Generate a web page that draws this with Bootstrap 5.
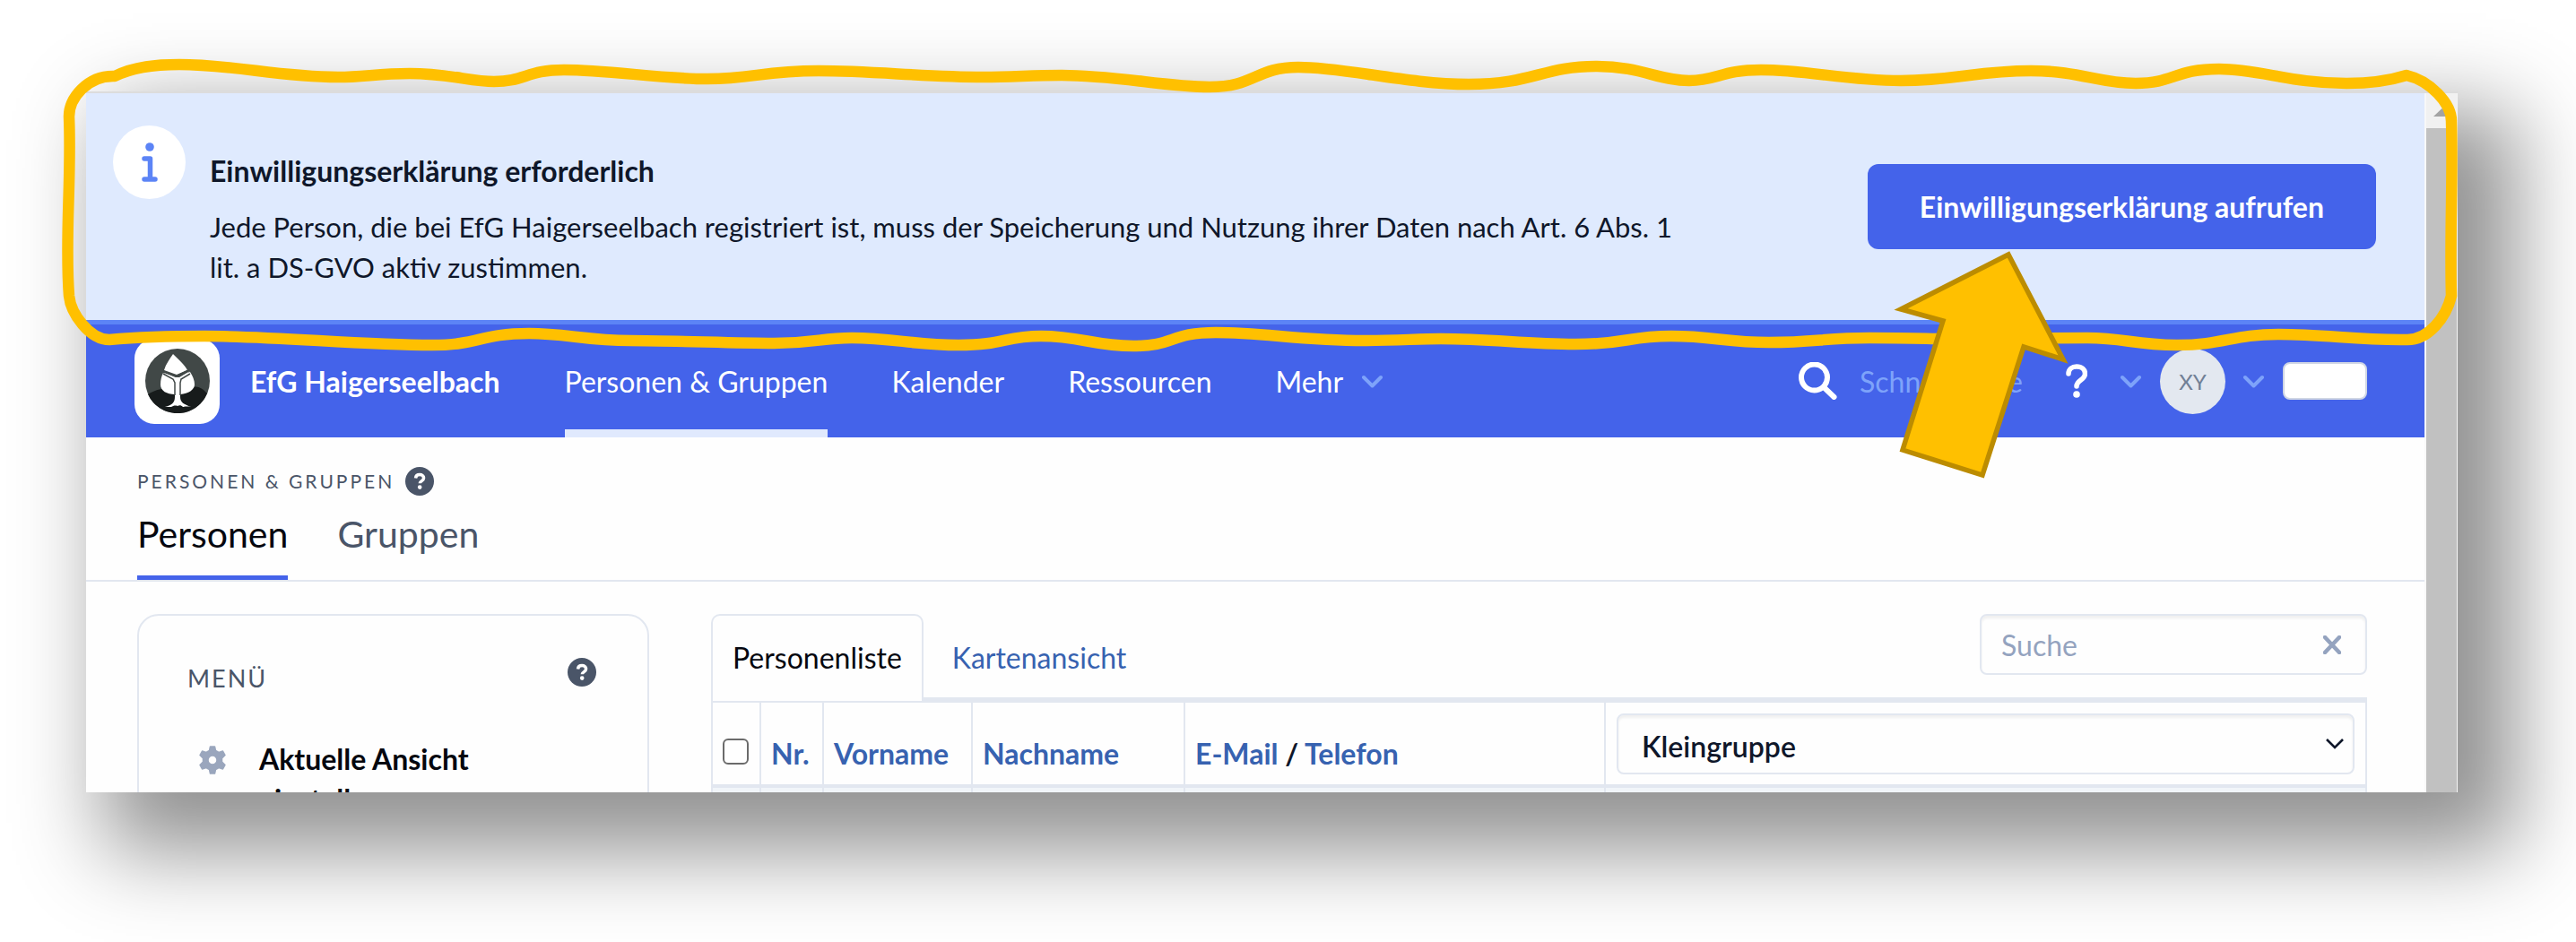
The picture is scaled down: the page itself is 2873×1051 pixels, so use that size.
<!DOCTYPE html>
<html lang="de">
<head>
<meta charset="utf-8">
<meta name="viewport" content="width=device-width, initial-scale=1">
<title>Personen &amp; Gruppen – EfG Haigerseelbach</title>
<link href="https://cdn.jsdelivr.net/npm/bootstrap@5.3.0/dist/css/bootstrap.min.css" rel="stylesheet">
<style>
  :root { --ink: #0f172a; --slate: #4a5568; --line: #e2e7f0; --accent: #4463ea; --link: #3762b0; --soft: #dfeafe; }
  body { font-family: Lato, "Liberation Sans", sans-serif; font-size: 32px; line-height: 45px; color: var(--ink); background: #fff; padding: 102px 132px 167px 96px; }
  a { text-decoration: none; }
  .app-window { border-top: 2px solid #dcdcdc; background: #fefefe; box-shadow: 42px 44px 90px 22px rgba(0, 0, 0, .43); }
  .app-main { min-width: 0; }

  .consent { background: var(--soft); border-bottom: 5px solid #5c84f6; padding: 36px 54px 36px 30px; gap: 27px; }
  .consent-icon { width: 81px; height: 82px; background: #fff; border-radius: 50%; }
  .consent-text { font-size: 31px; padding-top: 28px; padding-right: 180px; }
  .consent-title { font-size: 32px; line-height: 45px; font-weight: 700; margin-bottom: 18px; }
  .btn-consent { --bs-btn-bg: var(--accent); --bs-btn-color: #fff; --bs-btn-hover-bg: #3552d6; --bs-btn-hover-color: #fff; font-size: 32px; line-height: 45px; font-weight: 700; padding: 25px 58px; border-radius: 12px; }

  .topnav { background: var(--accent); height: 126px; padding: 0 64px 0 54px; }
  .topnav a { color: #fff; }
  .logo-tile { width: 95px; height: 95px; border-radius: 22px; background: #fff; }
  .brand-name { font-weight: 700; margin-left: 34px; margin-right: 72px; }
  .topnav .main-links { gap: 71px; }
  .topnav .main-links a { border-bottom: 9px solid transparent; padding-top: 9px; }
  .topnav .main-links a.active { border-color: #e0e9fd; }
  .more-chev { margin-left: 20px; }
  .quick { background: none; border: 0; color: #fff; width: 230px; padding: 0; margin-left: 25px; line-height: 45px; }
  .quick::placeholder { color: #7ea3fa; opacity: 1; }
  .quick:focus { outline: 0; }
  .help-btn { gap: 36px; margin-right: 20px; }
  .topnav .avatar { width: 73px; height: 73px; border-radius: 50%; background: #e3e8f0; color: #718096; font-size: 24px; }
  .user-chev { margin: 0 20px 0 19px; }
  .blank-btn { width: 94px; height: 42px; border-radius: 8px; border: 2px solid #cfd6e4; background: #fff; }
  .plain-btn { border: 0; background: none; padding: 0; line-height: 0; }

  .page-head { border-bottom: 2px solid var(--line); padding: 31px 57px 0; }
  .crumb { font-size: 21px; line-height: 35px; letter-spacing: 3px; color: var(--slate); gap: 12px; }
  .page-tabs { gap: 55px; font-size: 41px; line-height: 60px; padding-top: 12px; }
  .page-tabs a { color: var(--slate); padding-bottom: 16px; border-bottom: 5px solid transparent; }
  .page-tabs a.active { color: #05070f; border-color: var(--accent); }

  .page-body { padding: 36px 64px 0 57px; gap: 69px; }
  .side-menu { width: 571px; border: 2px solid var(--line); border-radius: 24px; padding: 47px 57px 47px 54px; }
  .side-title { font-size: 27px; line-height: 45px; letter-spacing: 2px; color: var(--slate); font-weight: 400; margin: 0; }
  .side-item { color: #05070f; font-weight: 700; gap: 36px; padding: 45px 60px 0 12px; }
  .list-area { min-width: 0; }
  .list-tabs { height: 97px; }
  .list-tabs .nav-link { border: 2px solid transparent; border-radius: 10px 10px 0 0; color: var(--link); padding: 24px 22px 22px; line-height: 46px; }
  .list-tabs .nav-link.active { color: #05070f; border-color: var(--line); border-bottom: 0; background: #fefefe; }
  .list-tabs .tab-fill { border-bottom: 4px solid var(--line); }
  .search-box { width: 432px; height: 68px; border: 2px solid var(--line); border-radius: 8px; box-shadow: inset 0 3px 3px rgba(0, 0, 0, .06); padding: 0 27px 0 22px; }
  .search-box input { border: 0; background: none; padding: 0; min-width: 0; line-height: 45px; }
  .search-box input::placeholder { color: #94a3bf; opacity: 1; }
  .search-box input:focus { outline: 0; }
  .people { table-layout: fixed; width: 100%; border-collapse: collapse; }
  .people col:nth-child(1) { width: 54px; }
  .people col:nth-child(2) { width: 70px; }
  .people col:nth-child(3) { width: 166px; }
  .people col:nth-child(4) { width: 237px; }
  .people col:nth-child(5) { width: 469px; }
  .people th, .people td { border: 2px solid var(--line); padding: 0 0 0 11px; }
  .people thead th { border-bottom: 4px solid var(--line); height: 94px; vertical-align: bottom; padding-bottom: 12px; font-weight: 700; white-space: nowrap; }
  .people thead th.pick { vertical-align: middle; padding: 0 12px; }
  .people td { height: 60px; background: #f1f5f9; }
  .people a { color: var(--link); }
  .people .form-check-input { display: block; width: 29px; height: 29px; margin: 0 0 10px; border: 2px solid #6b6b6b; border-radius: 6px; }
  .field-select { height: 68px; font-size: 32px; line-height: 45px; font-weight: 600; color: var(--ink); border: 2px solid var(--line); border-radius: 8px; padding: 5px 60px 0 26px; background-color: #fefefe; box-shadow: inset 0 3px 3px rgba(0, 0, 0, .06);
    background-image: url("data:image/svg+xml,%3Csvg xmlns='http://www.w3.org/2000/svg' viewBox='0 0 20 12'%3E%3Cpath fill='none' stroke='%230f172a' stroke-width='2.6' d='M1 1l9 9 9-9'/%3E%3C/svg%3E"); background-size: 20px 12px; background-position: right 10px center; }

  .scroll-rail { width: 37px; background: #f1f1f1; border-left: 2px solid #f8f8f8; border-right: 1px solid #f4f4f4; }
  .scroll-up { height: 39px; padding-top: 3px; }
  .scroll-thumb { background: #c1c1c1; }
  .notes { position: absolute; inset: 0; width: 100%; pointer-events: none; }
</style>
</head>
<body class="vh-100 position-relative overflow-hidden d-flex">

<svg class="d-none">
  <symbol id="chev" viewBox="0 0 25 15"><path d="M3 3l9.500 9.500L22 3" fill="none" stroke="#7ea3fa" stroke-width="4" stroke-linecap="round" stroke-linejoin="round"/></symbol>
  <symbol id="help" viewBox="0 0 32 32"><circle cx="16" cy="16" r="16" fill="#4a5568"/><path d="M11.500 12.500c.3-2.600 2-3.900 4.600-3.900 2.500 0 4.500 1.400 4.500 3.700 0 3.400-4.300 3.200-4.300 6" fill="none" stroke="#fff" stroke-width="3.500"/><circle cx="16.200" cy="22.600" r="2.300" fill="#fff"/></symbol>
</svg>

<div class="app-window flex-grow-1 d-flex">
  <div class="app-main flex-grow-1 overflow-hidden">

    <section class="consent d-flex align-items-start">
      <span class="consent-icon flex-shrink-0 d-flex align-items-center justify-content-center">
        <svg width="18" height="44" viewBox="0 0 18 44" fill="none" stroke="#5c84f6" stroke-width="5.500" stroke-linecap="round" stroke-linejoin="round"><circle cx="9" cy="5" r="4.800" fill="#5c84f6" stroke="none"/><path d="M3 18h6.500v22M3 41h12"/></svg>
      </span>
      <div class="consent-text flex-grow-1">
        <h2 class="consent-title">Einwilligungserklärung erforderlich</h2>
        <p class="mb-0">Jede Person, die bei EfG Haigerseelbach registriert ist, muss der Speicherung und Nutzung ihrer Daten nach Art. 6 Abs. 1 lit. a DS-GVO aktiv zustimmen.</p>
      </div>
      <button type="button" class="btn btn-consent flex-shrink-0 align-self-center border-0">Einwilligungserklärung aufrufen</button>
    </section>

    <nav class="topnav d-flex align-items-center text-nowrap">
      <a href="#" class="logo-tile flex-shrink-0 d-flex align-items-center justify-content-center" aria-label="Startseite">
        <svg width="72" height="72" viewBox="0 0 72 72">
          <circle cx="36" cy="36" r="36" fill="#414847"/>
          <path d="M3 51C10 46 22 43 36 43s22-3 29 3q2 2 4 4A36 36 0 0 1 3 51z" fill="#171b1b"/>
          <g fill="#fff"><path d="M31 6c6 6 13 12 16 18l-12 5-14-5C23 17 27 12 31 6z"/><path d="M20 27c6 2 12 5 13 8v16c-9 0-16-4-16-11 0-5 1-9 3-13z"/><path d="M50 26c-6 2-10 5-11 9v16c9-1 16-5 16-11 0-5-2-9-5-14z"/><path d="M33 35l-12-8 13 5h4l12-7-11 9v20c0 6 4 8 12 11-6-1-8 0-9 0-2-2-4-2-6-1-3-1-5 0-7 1-3 0-4 0-7 0 8-2 11-5 11-11z"/></g>
          <path d="M20 25l14 6 14-7M20 28l11 6 2 4v14M50 28l-10 6-1 4v14" fill="none" stroke="#414847" stroke-width="1.500"/>
        </svg>
      </a>
      <a href="#" class="brand-name">EfG Haigerseelbach</a>
      <div class="main-links d-flex h-100">
        <a href="#" class="active d-flex align-items-center" aria-current="page">Personen &amp; Gruppen</a>
        <a href="#" class="d-flex align-items-center">Kalender</a>
        <a href="#" class="d-flex align-items-center">Ressourcen</a>
        <a href="#" class="d-flex align-items-center">Mehr <svg class="more-chev" width="25" height="15"><use href="#chev"/></svg></a>
      </div>
      <label class="ms-auto d-flex align-items-center" for="quick" aria-label="Schnellsuche">
        <svg width="43" height="42" viewBox="0 0 43 42" fill="none" stroke="#fff" stroke-width="6" stroke-linecap="round"><circle cx="17.500" cy="17" r="14.500"/><path d="M28 28l11.500 11"/></svg>
      </label>
      <input class="quick" id="quick" type="text" placeholder="Schnellsuche">
      <button type="button" class="plain-btn help-btn d-flex align-items-center" aria-label="Hilfe">
        <svg width="24" height="38" viewBox="0 0 24 38"><path d="M3 11c0-5 4-8 9-8 6 0 9.500 3.500 9.500 8 0 7-9.500 7-9.500 14" fill="none" stroke="#fff" stroke-width="5.500" stroke-linecap="round"/><circle cx="12" cy="34" r="3.800" fill="#fff"/></svg>
        <svg width="25" height="15"><use href="#chev"/></svg>
      </button>
      <a href="#" class="avatar flex-shrink-0 d-flex align-items-center justify-content-center">XY</a>
      <svg class="user-chev flex-shrink-0" width="25" height="15"><use href="#chev"/></svg>
      <button type="button" class="blank-btn flex-shrink-0" aria-label="Aktion"></button>
    </nav>

    <header class="page-head">
      <div class="crumb d-flex align-items-center">PERSONEN &amp; GRUPPEN <svg width="32" height="32"><use href="#help"/></svg></div>
      <div class="page-tabs d-flex">
        <a href="#" class="active" aria-current="page">Personen</a>
        <a href="#">Gruppen</a>
      </div>
    </header>

    <div class="page-body d-flex align-items-start">
      <aside class="side-menu flex-shrink-0">
        <div class="d-flex justify-content-between">
          <h3 class="side-title">MENÜ</h3>
          <svg width="32" height="32"><use href="#help"/></svg>
        </div>
        <a href="#" class="side-item d-flex align-items-start">
          <svg class="flex-shrink-0 mt-2" width="32" height="32" viewBox="-16 -16 32 32" fill="#9aa6bd" stroke="#9aa6bd" stroke-width="1.500" stroke-linejoin="round"><path fill-rule="evenodd" d="M-2.500-15h5l1 4.500L7-8.500l4.500-1.500 2.500 4.500L10.500-2v4l3.500 3.500-2.500 4.500L7 8.500 3.500 10.500l-1 4.500h-5l-1-4.500L-7 8.500l-4.500 1.500L-14 5.500-10.500 2v-4L-14-5.500l2.500-4.500 4.500 1.500 3.500-2zM0-5a5 5 0 1 0 0 10A5 5 0 1 0 0-5z"/></svg>
          <span>Aktuelle Ansicht<br>einstellen</span>
        </a>
      </aside>

      <div class="list-area flex-grow-1">
        <div class="list-tabs d-flex">
          <a href="#" class="nav-link active">Personenliste</a>
          <div class="tab-fill flex-grow-1 d-flex justify-content-between align-items-start ps-2">
            <a href="#" class="nav-link">Kartenansicht</a>
            <div class="search-box d-flex align-items-center">
              <input class="flex-grow-1" type="text" placeholder="Suche" aria-label="Suche">
              <button type="button" class="plain-btn" aria-label="Leeren"><svg width="20" height="21" viewBox="0 0 20 21"><path d="M2 2l16 17M18 2L2 19" stroke="#94a3bf" stroke-width="4.500" stroke-linecap="round"/></svg></button>
            </div>
          </div>
        </div>
        <table class="people">
          <colgroup><col><col><col><col><col><col></colgroup>
          <thead>
            <tr>
              <th><input class="form-check-input" type="checkbox" aria-label="Alle auswählen"></th>
              <th><a href="#">Nr.</a></th>
              <th><a href="#">Vorname</a></th>
              <th><a href="#">Nachname</a></th>
              <th><a href="#">E-Mail</a> / <a href="#">Telefon</a></th>
              <th class="pick"><select class="form-select field-select" aria-label="Spalte"><option>Kleingruppe</option></select></th>
            </tr>
          </thead>
          <tbody><tr><td></td><td></td><td></td><td></td><td></td><td></td></tr></tbody>
        </table>
      </div>
    </div>
  </div>

  <div class="scroll-rail flex-shrink-0 d-flex flex-column">
    <div class="scroll-up d-flex align-items-center justify-content-center"><svg width="19" height="9" viewBox="0 0 19 9"><path d="M9.500 0L19 9H0z" fill="#a3a3a3"/></svg></div>
    <div class="scroll-thumb flex-grow-1"></div>
  </div>
</div>

<!-- Hand-drawn frame around the consent banner and the arrow to its button -->
<svg class="notes" viewBox="0 0 2873 1051" fill="none" aria-hidden="true">
  <path stroke="#ffc000" stroke-width="12.500" stroke-linejoin="round" d="M128 85C150 74 175 72 200 72C262 72 310 86 377 86C407 86 420 82 457 82C500 82 525 91 551 91C585 91 588 78 629 78C680 78 735 88 789 88C840 88 850 79 913 79C975 79 1030 86 1097 86C1130 86 1150 84 1184 84C1245 84 1300 97 1349 97C1400 97 1400 75 1448 75C1500 75 1570 94 1638 94C1710 94 1720 74 1781 74C1830 74 1850 90 1884 90C1915 90 1920 78 1964 78C2015 78 2060 90 2120 90C2180 90 2205 79 2265 79C2320 79 2340 93 2382 93C2425 93 2425 77 2475 77C2520 77 2555 93 2617 93C2645 93 2665 90 2684 84C2710 90 2734 115 2734 135C2736 200 2732 260 2734 330C2728 355 2708 379 2685 379C2630 380 2595 373 2541 373C2490 373 2480 385 2428 385C2380 385 2370 377 2328 377C2280 377 2200 378 2155 378C2130 377 2110 377 2085 377C2035 377 2025 382 1973 382C1925 382 1910 375 1864 375C1815 375 1815 384 1757 384C1700 384 1665 378 1607 378C1580 378 1560 380 1522 380C1450 380 1410 371 1356 371C1305 371 1310 386 1264 386C1220 386 1205 375 1161 375C1120 375 1120 385 1069 385C1020 385 995 377 950 377C915 377 910 383 863 383C820 383 750 380 703 380C655 380 630 372 590 372C535 372 535 385 482 385C400 385 310 375 228 375C190 375 155 376 122 379C100 379 79 350 77 330C72 265 80 200 77 130C77 110 97 84 128 85Z"/>
  <path fill="#ffc000" stroke="#bc8c00" stroke-width="5.500" d="M2240 284L2301 401L2257 387L2211 530L2122 502L2167 358L2120 345Z"/>
</svg>

<script src="https://cdn.jsdelivr.net/npm/bootstrap@5.3.0/dist/js/bootstrap.bundle.min.js"></script>
</body>
</html>
